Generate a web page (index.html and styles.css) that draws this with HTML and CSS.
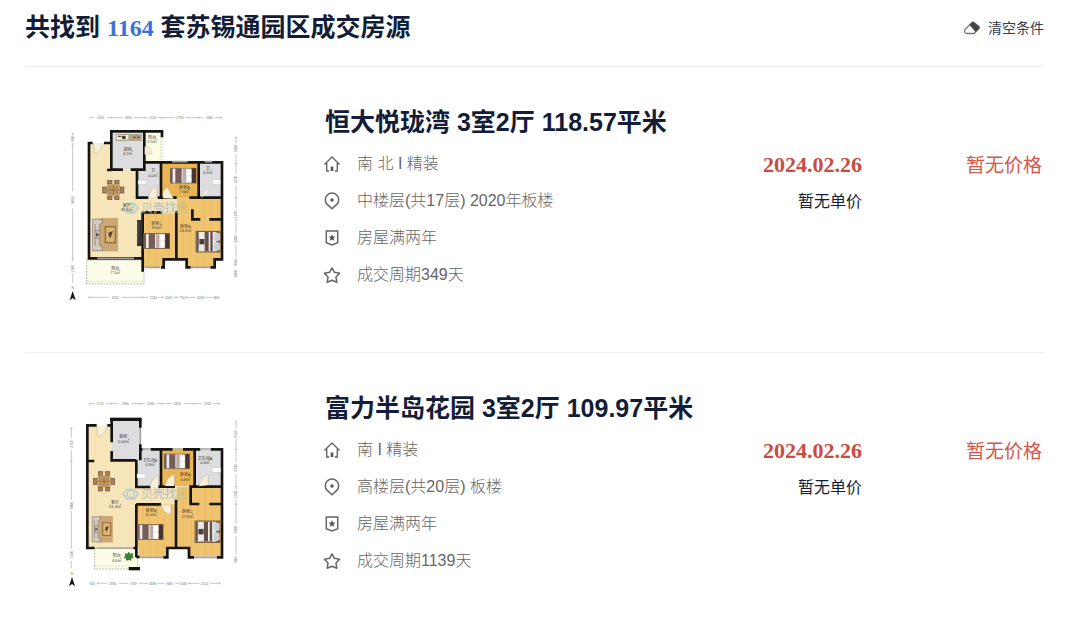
FILE: index.html
```html
<!DOCTYPE html>
<html lang="zh-CN">
<head>
    <meta charset="UTF-8">
    <meta name="viewport" content="width=device-width, initial-scale=1.0">
    <title>苏锡通园区成交房源</title>
    <link rel="stylesheet" href="styles.css">
</head>
<body>
    <!-- shared shapes -->
    <svg class="sprite" width="0" height="0" aria-hidden="true">
        <symbol id="icon-house" viewBox="0 0 18 18">
            <path d="M1.500 9.500 9 2l7.500 7.500M3.700 8V16H6.200M14.300 8V16H11.800" fill="none" stroke="#666" stroke-width="1.400"/>
            <path d="M7.700 11.500h2.600V16H7.700z" fill="#555"/>
        </symbol>
        <symbol id="icon-pin" viewBox="0 0 18 18">
            <path d="M9 16.800 4.200 12.400a6.700 6.700 0 1 1 9.600 0z" fill="none" stroke="#666" stroke-width="1.500"/>
            <circle cx="9" cy="8" r="1.700" fill="#555"/>
        </symbol>
        <symbol id="icon-badge" viewBox="0 0 18 18">
            <path d="M3.300 2h11.400v11.800L9 16l-5.700-2.200z" fill="none" stroke="#666" stroke-width="1.500"/>
            <path d="m9 5 1 2.400 2.500.2-1.900 1.600.6 2.500L9 10.400l-2.200 1.300.6-2.500-1.900-1.600L8 7.400z" fill="#555"/>
        </symbol>
        <symbol id="icon-star" viewBox="0 0 18 18">
            <path d="m9 1.800 2.400 4.500 5.200.9-3.600 3.900.8 5.100L9 14.200l-4.800 2 .8-5.100-3.600-3.900 5.200-.9z" fill="none" stroke="#666" stroke-width="1.500" stroke-linejoin="round"/>
        </symbol>
        <symbol id="bed" viewBox="0 0 80 48">
            <rect width="80" height="48" fill="#8c6b4e"/>
            <rect x="2" y="3" width="62" height="42" fill="#efebe8"/>
            <path d="M0 2h8v44H0zM16 2h19v44H16z" fill="#765e58"/>
            <path d="M38 4h10v40H38z" fill="#b9aaa5"/>
            <rect x="66" y="2" width="12" height="44" fill="#463530"/>
            <rect x="52" y="6" width="12" height="16" rx="4" fill="#fff"/>
            <rect x="52" y="26" width="12" height="16" rx="4" fill="#fff"/>
        </symbol>
        <symbol id="big-bed" viewBox="0 0 76 66">
            <rect width="76" height="66" fill="#7d5b3c"/>
            <rect x="3" y="4" width="60" height="58" fill="#eee9e3"/>
            <path d="M3 4h7v58H3zM28 4h12v58H28zM45 4h7v58h-7z" fill="#62504a"/>
            <rect x="12" y="25" width="15" height="16" fill="#4b403c"/>
            <rect x="56" y="6" width="18" height="25" rx="6" fill="#c9d0d6"/>
            <rect x="56" y="35" width="18" height="25" rx="6" fill="#c9d0d6"/>
        </symbol>
        <symbol id="dining" viewBox="0 0 68 62">
            <g fill="#ae8250" stroke="#5f5145" stroke-width="2">
                <rect x="17" y="2" width="13" height="11"/>
                <rect x="38" y="2" width="13" height="11"/>
                <rect x="17" y="49" width="13" height="11"/>
                <rect x="38" y="49" width="13" height="11"/>
                <rect x="2" y="22" width="11" height="18"/>
                <rect x="55" y="22" width="11" height="18"/>
            </g>
            <rect x="14" y="14" width="40" height="34" rx="4" fill="#d09c5b"/>
            <path d="M34 15v32M16 31h36" stroke="#765032" stroke-width="2"/>
            <g fill="#7e9298"><circle cx="24" cy="23" r="4"/><circle cx="44" cy="23" r="4"/><circle cx="24" cy="39" r="4"/><circle cx="44" cy="39" r="4"/></g>
        </symbol>
        <symbol id="lounge" viewBox="0 0 80 102">
            <rect x="24" y="0" width="54" height="100" fill="#c9a876"/>
            <rect x="38" y="24" width="34" height="52" fill="#9a6c38"/>
            <rect x="42" y="28" width="26" height="44" fill="#d9b378"/>
            <path d="m49 44 14-5-7 20-5-3z" fill="#594432"/>
            <path d="M1 4h30v12l-8 3v64l8 3v12H1z" fill="#d3cac2" stroke="#776b65" stroke-width="2"/>
            <path d="M9 18v66M9 38h15M9 61h15" stroke="#776b65" stroke-width="2"/>
            <path d="m12 43 10 7-9 8z" fill="#5c5050"/>
        </symbol>
        <symbol id="beike-mark" viewBox="0 0 50 50">
            <path d="M14 11h20l13 14-13 15H14L1 25z" fill="none" stroke="#b3cad2" stroke-width="4"/>
            <circle cx="24" cy="25" r="11" fill="none" stroke="#b3cad2" stroke-width="4"/>
        </symbol>
    </svg>

    <div class="container">
        <header class="result-head">
            <h1>共找到 <span class="count">1164</span> 套苏锡通园区成交房源</h1>
            <button type="button" class="clear-btn">
                <svg width="18" height="16" viewBox="0 0 18 16" aria-hidden="true">
                    <path d="M2 9.500 9 2.500Q10 1.500 11 2.500l5 4q1 1 0 2l-5 5H3.500Q.5 12.500 2 9.500z" fill="#fff" stroke="#777" stroke-width="1.300"/>
                    <path d="M6.500 5 9 2.500Q10 1.500 11 2.500l5 4q1 1 0 2l-3.500 3.500z" fill="#444"/>
                </svg>
                清空条件
            </button>
        </header>

        <main>
            <article class="listing">
                <a class="plan" href="#" aria-label="恒大悦珑湾 户型图">
                    <svg viewBox="0 0 570 600">
                        <!-- floors -->
                        <path d="M88 114h67v80h78v85h117v46H246v137H88z" fill="#f6e5b9"/>
                        <path d="M155 83h97v111h-97zM233 175h70v104h-70zM417 173h69v105h-69z" fill="#dddde0"/>
                        <path d="M252 83h54v90h-54z" fill="#fcfbe6"/>
                        <path d="M305 173h110v106H305z" fill="#ecb553"/>
                        <path d="M248 325h102v140h-38v22h-64zM350 280h136v184h-22v24h-87v-24h-27z" fill="#f1c46f"/>
                        <path d="M80 465h172v72H80z" fill="#fcfde9" stroke="#888" stroke-width="2" stroke-dasharray="5 4"/>
                        <path d="M82 529h165" stroke="#888" stroke-dasharray="5 4"/>
                        <path d="M267 327v158M288 327v158M308 327v134M328 327v134M370 282v180M391 345v140M412 345v140M433 282v203M454 282v203M474 282v180M325 175v103M350 175v103M375 175v103M398 175v103" stroke="#d99b40" opacity=".5"/>
                        <!-- walls -->
                        <path d="M98 114H87v346h161v40M132 114h22V79h152v18M154 82v112M153 194h36M212 194h41V83M141 195h14M253 172h233v110M303 172v106M416 172v106M231 194v84h34M293 278h57M388 278h98M486 278v185h-22v24h-13M349 318v145h-38v24h-8M248 322v175M248 322h58M397 313v30h24M448 343h38M349 463h31v24h12" fill="none" stroke="#151412" stroke-width="8"/>
                        <path d="M336 170h47M434 170h23M254 487h46M392 487h60M112 460h110" stroke="#a4a19b" stroke-width="5"/>
                        <path d="M309 97v73M303 97v73" stroke="#888" stroke-dasharray="5 4"/>
                        <path d="M102 114v30q23-4 26-30M254 125q20-3 22 20l-22 4M266 277q4-28 25-31v31M309 280q-3-30 14-32 10 18 18 33M424 278q3-26 27-25M306 322q6-26 39-26" fill="#f7efd8" stroke="#9d988b"/>
                        <!-- furniture -->
                        <path d="M167 87h78v21h-78z" fill="#aea58b"/>
                        <path d="M170 90h35v14h-35z" fill="#eee"/>
                        <path d="M174 94h10M188 94h7v6h-7zM220 97h7M232 97h7" stroke="#494438" stroke-width="4"/>
                        <path d="M234 226h24v12h-24zM458 224h23v13h-23z" fill="#fff" stroke="#aaa"/>
                        <use href="#dining" x="126" y="224" width="68" height="62"/>
                        <use href="#lounge" x="96" y="339" width="80" height="102"/>
                        <use href="#bed" x="330" y="188" width="80" height="48"/>
                        <use href="#bed" x="250" y="384" width="80" height="48"/>
                        <use href="#big-bed" x="406" y="377" width="76" height="66"/>
                        <path d="M231 345h16v78h-16z" fill="#343332"/>
                        <path d="M234 350v66" stroke="#747270" stroke-width="2"/>
                        <use href="#beike-mark" x="188" y="284" width="50" height="50"/>
                        <text x="244" y="321" class="mark-text">贝壳找房</text>
                        <!-- room names -->
                        <g class="room">
                            <text x="203" y="137">厨房<tspan x="203" dy="13">4.2㎡</tspan></text>
                            <text x="276" y="101">阳台<tspan x="276" dy="12">2.5㎡</tspan></text>
                            <text x="279" y="202">卫<tspan x="279" dy="13">4.0㎡</tspan></text>
                            <text x="443" y="195">卫<tspan x="443" dy="13">4.3㎡</tspan></text>
                            <text x="373" y="251">卧室A<tspan x="373" dy="13">7.6㎡</tspan></text>
                            <text x="200" y="305">客厅<tspan x="200" dy="13">31.6㎡</tspan></text>
                            <text x="290" y="360">卧室C<tspan x="290" dy="13">8.6㎡</tspan></text>
                            <text x="376" y="368">卧室B<tspan x="376" dy="13">16.8㎡</tspan></text>
                            <text x="166" y="495">阳台<tspan x="166" dy="13">7.1㎡</tspan></text>
                        </g>
                        <!-- dimensions -->
                        <path d="M92 38h10M140 38h48M222 38h42M292 38h52M376 38h54M464 38h22M38 84v8M38 113v145M38 310v160M38 505v28M528 94v22M528 146v60M528 240v70M528 345v40M528 420v38M85 577h62M184 577h82M295 577h15M342 577h14M376 577h31M438 577h22" class="rule"/>
                        <path d="M90 35v6M154 35v6M253 35v6M305 35v6M417 35v6M484 35v6M35 86h6M35 120h6M35 460h6M525 98h6M525 175h6M525 278h6M525 343h6M525 463h6M88 574v6M248 574v6M308 574v6M349 574v6M380 574v6M464 574v6" class="rule"/>
                        <g class="dim">
                            <text x="121" y="42">1320</text><text x="205" y="42">3960</text><text x="278" y="42">1120</text><text x="360" y="42">2790</text><text x="448" y="42">1680</text>
                            <text x="166" y="581">4232</text><text x="280" y="581">1584</text><text x="326" y="581">1041</text><text x="366" y="581">790</text><text x="422" y="581">2050</text><text x="470" y="581">690</text>
                            <text transform="translate(42 102) rotate(-90)">990</text><text transform="translate(42 285) rotate(-90)">9050</text><text transform="translate(42 492) rotate(-90)">1780</text>
                            <text transform="translate(532 131) rotate(-90)">1880</text><text transform="translate(532 223) rotate(-90)">2750</text><text transform="translate(532 328) rotate(-90)">1270</text><text transform="translate(532 402) rotate(-90)">3400</text><text transform="translate(532 474) rotate(-90)">460</text><text transform="translate(532 506) rotate(-90)">2200</text>
                            <text x="38" y="553">N</text>
                        </g>
                        <path d="m38 558 9 28-9-7-9 7z" fill="#151412"/>
                    </svg>
                </a>
                <div class="info">
                    <h2><a href="#">恒大悦珑湾 3室2厅 118.57平米</a></h2>
                    <ul>
                        <li><svg class="icon"><use href="#icon-house"/></svg>南 北 I 精装</li>
                        <li><svg class="icon"><use href="#icon-pin"/></svg>中楼层(共17层) 2020年板楼</li>
                        <li><svg class="icon"><use href="#icon-badge"/></svg>房屋满两年</li>
                        <li><svg class="icon"><use href="#icon-star"/></svg>成交周期349天</li>
                    </ul>
                </div>
                <div class="deal">
                    <div class="date">2024.02.26</div>
                    <div class="unit">暂无单价</div>
                </div>
                <div class="price">暂无价格</div>
            </article>

            <article class="listing">
                <a class="plan" href="#" aria-label="富力半岛花园 户型图">
                    <svg viewBox="0 0 570 600">
                        <!-- floors -->
                        <path d="M84 106h72v102h73v80h120v51H229v129H84z" fill="#f6e5b9"/>
                        <path d="M156 88h84v118h-84zM230 176h73v110h-73zM406 176h78v108h-78z" fill="#dddde0"/>
                        <path d="M306 176h98v110h-98z" fill="#ecb553"/>
                        <path d="M230 339h118v130h-28v28h-84v-28h-6zM349 287h136v181v28h-99v-28h-37z" fill="#f1c46f"/>
                        <path d="M108 472h125v62H104v-62z" fill="#fcfde9" stroke="#888" stroke-width="2" stroke-dasharray="5 4"/>
                        <path d="M104 525h102" stroke="#888" stroke-dasharray="5 4"/>
                        <path d="M250 341v155M271 341v155M292 341v155M313 341v155M334 341v127M370 290v178M393 345v150M414 345v150M435 290v206M456 290v206M326 178v106M349 178v106M373 178v106" stroke="#d99b40" opacity=".5"/>
                        <!-- walls -->
                        <path d="M110 103H82v368h22M142 103h13V85h86v25M155 89v65M155 180v28h74M241 160v48M82 210h21M240 175h8M272 175h66M369 175h52M452 175h34v112M229 207v81h42M295 287h12M303 175v112h42M404 175v112h-16M392 287h94M486 287v212h-16M229 498h10M229 340v159M229 340h74M348 326v145h-26v28h-12M392 287v52h26M448 339h38M334 471h53v28h15M220 471h9" fill="none" stroke="#151412" stroke-width="8"/>
                        <path d="M150 85h94" stroke="#151412" stroke-width="10"/>
                        <path d="M206 533h34" stroke="#151412" stroke-width="10"/>
                        <path d="M248 174h24M338 174h30M421 174h30M241 111v48M239 499h70M402 499h66M110 471h108" stroke="#a4a19b" stroke-width="5"/>
                        <path d="M112 106v30q25-3 28-30M271 286q4-28 24-31v31M315 285q5-26 28-36v36M417 286q6-30 28-36v32M304 341q5 28 29 29v-29" fill="#f7efd8" stroke="#9d988b"/>
                        <!-- furniture -->
                        <path d="M231 248h26v13h-26zM456 230h26v14h-26z" fill="#fff" stroke="#aaa"/>
                        <use href="#dining" x="98" y="240" width="68" height="62"/>
                        <use href="#lounge" x="90" y="374" width="76" height="82"/>
                        <use href="#bed" x="312" y="187" width="78" height="48"/>
                        <use href="#bed" x="231" y="399" width="80" height="48"/>
                        <use href="#big-bed" x="403" y="388" width="78" height="68"/>
                        <use href="#beike-mark" x="188" y="284" width="50" height="50"/>
                        <text x="244" y="321" class="mark-text">贝壳找房</text>
                        <path d="m206 482 5 6 8-2-1 8 4 5-7 3-2 7-7-2-7 2-2-7-6-3 5-5-2-7 8 1z" fill="#3d8134"/>
                        <!-- room names -->
                        <g class="room">
                            <text x="190" y="142">厨房<tspan x="190" dy="13">4.04㎡</tspan></text>
                            <text x="270" y="213">卫生间B<tspan x="270" dy="13">4.8㎡</tspan></text>
                            <text x="435" y="206">卫生间A<tspan x="435" dy="13">4.4㎡</tspan></text>
                            <text x="376" y="256">卧室A<tspan x="376" dy="13">6.8㎡</tspan></text>
                            <text x="165" y="338">客厅<tspan x="165" dy="13">31.4㎡</tspan></text>
                            <text x="273" y="362">卧室B<tspan x="273" dy="13">11.4㎡</tspan></text>
                            <text x="382" y="367">卧室C<tspan x="382" dy="13">17.8㎡</tspan></text>
                            <text x="170" y="499">阳台<tspan x="170" dy="13">4.6㎡</tspan></text>
                        </g>
                        <!-- dimensions -->
                        <path d="M87 38h18M137 38h40M213 38h42M289 38h46M371 38h54M460 38h20M34 110v30M34 178v150M34 360v110M34 510v22M528 92v20M528 145v70M528 248v48M528 325v74M528 434v55M110 577h32M176 577h30M236 577h28M292 577h22M346 577h12M384 577h34M450 577h30" class="rule"/>
                        <path d="M88 35v6M154 35v6M240 35v6M305 35v6M403 35v6M477 35v6M31 112h6M31 210h6M31 471h6M525 92h6M525 175h6M525 287h6M525 340h6M525 498h6M113 574v6M229 574v6M320 574v6M390 574v6M478 574v6" class="rule"/>
                        <g class="dim">
                            <text x="120" y="42">1710</text><text x="195" y="42">1980</text><text x="272" y="42">1580</text><text x="352" y="42">2870</text><text x="443" y="42">1920</text>
                            <text x="96" y="581">740</text><text x="158" y="581">2980</text><text x="220" y="581">670</text><text x="278" y="581">3080</text><text x="330" y="581">680</text><text x="370" y="581">1040</text><text x="434" y="581">2510</text>
                            <text transform="translate(38 159) rotate(-90)">2710</text><text transform="translate(38 344) rotate(-90)">6800</text><text transform="translate(38 490) rotate(-90)">1500</text>
                            <text transform="translate(532 129) rotate(-90)">2150</text><text transform="translate(532 231) rotate(-90)">2790</text><text transform="translate(532 310) rotate(-90)">1350</text><text transform="translate(532 416) rotate(-90)">4100</text><text transform="translate(532 508) rotate(-90)">960</text>
                            <text x="36" y="553">N</text>
                        </g>
                        <path d="m36 558 9 28-9-7-9 7z" fill="#151412"/>
                    </svg>
                </a>
                <div class="info">
                    <h2><a href="#">富力半岛花园 3室2厅 109.97平米</a></h2>
                    <ul>
                        <li><svg class="icon"><use href="#icon-house"/></svg>南 I 精装</li>
                        <li><svg class="icon"><use href="#icon-pin"/></svg>高楼层(共20层) 板楼</li>
                        <li><svg class="icon"><use href="#icon-badge"/></svg>房屋满两年</li>
                        <li><svg class="icon"><use href="#icon-star"/></svg>成交周期1139天</li>
                    </ul>
                </div>
                <div class="deal">
                    <div class="date">2024.02.26</div>
                    <div class="unit">暂无单价</div>
                </div>
                <div class="price">暂无价格</div>
            </article>
        </main>
    </div>
</body>
</html>
```
FILE: styles.css
```css
* {
    box-sizing: border-box;
}
body {
    margin: 0;
    background-color: #fff;
    color: #131d38;
    font-family: "Liberation Sans", "Noto Sans CJK SC", sans-serif;
}
h1, h2, ul {
    margin: 0;
    padding: 0;
}
a {
    color: inherit;
    text-decoration: none;
}
.sprite {
    display: block;
}
.container {
    padding: 0 36px 0 25px;
}
.result-head {
    display: flex;
    justify-content: space-between;
    align-items: center;
    padding: 9px 0 20px;
    border-bottom: 1px solid #efefef;
}
h1 {
    font-size: 25px;
    line-height: 36px;
    font-weight: bold;
}
.count {
    color: #3a72dc;
    font-family: "Liberation Serif", serif;
    font-size: 24px;
}
.clear-btn {
    display: flex;
    align-items: center;
    gap: 7px;
    padding: 0;
    border: none;
    background: none;
    color: #333b4c;
    font-family: inherit;
    font-size: 14px;
    line-height: 20px;
    cursor: pointer;
}
.listing {
    display: grid;
    grid-template-columns: 300px 1fr 140px 180px;
    min-height: 286px;
    padding: 37px 2px 0 0;
    border-bottom: 1px solid #efefef;
}
.listing:last-child {
    min-height: 0;
    border-bottom: none;
}
.plan {
    padding: 1px 0 0 35px;
}
.plan svg {
    display: block;
    width: 190px;
    height: 200px;
}
h2 {
    font-size: 25px;
    line-height: 36px;
    font-weight: bold;
    white-space: nowrap;
}
ul {
    margin-top: 5px;
    list-style: none;
}
li {
    display: flex;
    align-items: center;
    gap: 16px;
    color: #666;
    font-size: 16px;
    font-weight: 300;
    line-height: 37px;
    white-space: nowrap;
}
.icon {
    width: 18px;
    height: 18px;
    margin-left: -2px;
}
.deal {
    padding-top: 42px;
    text-align: right;
}
.date {
    color: #cd4a3f;
    font-family: "Liberation Serif", serif;
    font-size: 22px;
    font-weight: bold;
    line-height: 37px;
}
.unit {
    font-size: 16px;
    line-height: 37px;
}
.price {
    padding-top: 43px;
    color: #d3574b;
    font-size: 19px;
    line-height: 37px;
    text-align: right;
}

/* floor plan lettering */
.room {
    fill: #3c3a36;
    font-size: 12px;
    text-anchor: middle;
}
.dim {
    fill: #777;
    font-size: 10px;
    text-anchor: middle;
}
.rule {
    fill: none;
    stroke: #aaa;
    stroke-width: 2px;
}
.mark-text {
    fill: #b5bfbd;
    font-size: 35px;
}
```
